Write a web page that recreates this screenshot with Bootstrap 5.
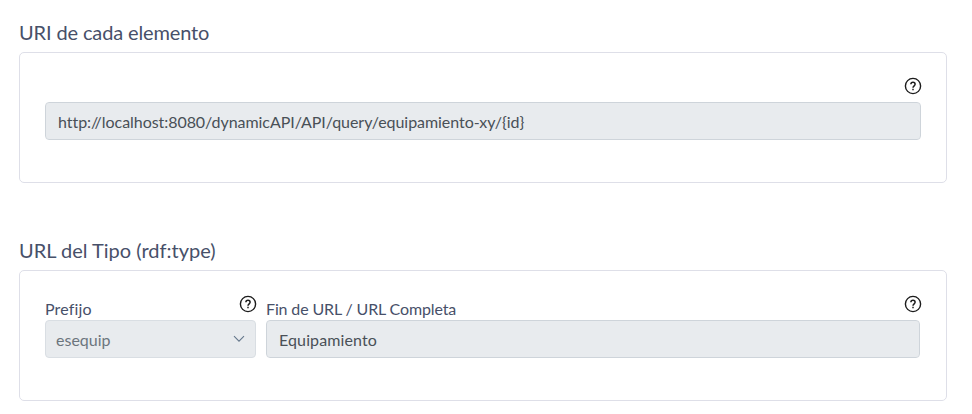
<!DOCTYPE html>
<html lang="es">
<head>
<meta charset="utf-8">
<meta name="viewport" content="width=device-width, initial-scale=1">
<title>URI</title>
<link href="https://cdn.jsdelivr.net/npm/bootstrap@5.3.0/dist/css/bootstrap.min.css" rel="stylesheet">
<style>
body{font-family:Lato,sans-serif;color:#475069;font-size:16px;background:#fff;overflow:hidden;font-variant-ligatures:none}
.page{padding:18px 25px 0 19px}
.title{font-size:20px;line-height:28px;height:34px;font-weight:400;margin:0}
.title-uri{letter-spacing:-.13px}
.panel{border:1px solid #dedfe8;border-radius:5px;height:131px;padding:22px 25px 0}
.panel+.title{margin-top:53px}
.labels{height:27px}
.labels label{padding-top:4px}
.label-prefix{letter-spacing:.15px}
.label-ending{letter-spacing:-.14px}
.field,.field:focus,.field:disabled{height:38px;background-color:#e8ebee;border:1px solid #ced4da;border-radius:4px;color:#495057;opacity:1}
.uri{letter-spacing:-.05px}
.ending{letter-spacing:.12px}
.prefix,.prefix:disabled{padding:7px 30px 5px 10px;color:#6c757d;border-color:#d9dee3;background-image:none}
.help{width:18px;height:18px;color:#1c1c1c;margin:2px -.5px 0 0}
.pre .help{margin-right:-1px}
.chevron{width:12px;height:8px;right:11px;top:15px;color:#65788c}
.pre{width:211px}
.rest{margin-left:10px}
.rest .field{width:calc(100% - 1px)}
</style>
</head>
<body>
<svg class="d-none"><symbol id="help" viewBox="0 0 18 18"><g fill="none" stroke="currentColor"><circle cx="9" cy="9" r="7.6" stroke-width="1.4"/><path d="M6.9 7.3c0-2.6 4.2-2.6 4.2 0 0 1.5-2.1 1.6-2.1 3.5" stroke-width="1.5"/><path d="M9 11.7v1.5" stroke-width="1.5"/></g></symbol></svg>
<main class="page">
<h2 class="title title-uri">URI de cada elemento</h2>
<section class="panel">
<div class="labels d-flex justify-content-end"><svg class="help"><use href="#help"/></svg></div>
<input class="form-control field uri" value="http://localhost:8080/dynamicAPI/API/query/equipamiento-xy/{id}" readonly>
</section>
<h2 class="title">URL del Tipo (rdf:type)</h2>
<section class="panel">
<div class="d-flex">
<div class="pre">
<div class="labels d-flex justify-content-between"><label class="label-prefix" for="prefix">Prefijo</label><svg class="help"><use href="#help"/></svg></div>
<div class="position-relative">
<select id="prefix" class="form-select field prefix" disabled><option>esequip</option></select>
<svg class="chevron position-absolute" viewBox="0 0 12 8" fill="none" stroke="currentColor" stroke-width="1.1"><path d="M1 1.2 6 6.2l5-5"/></svg>
</div>
</div>
<div class="flex-grow-1 rest">
<div class="labels d-flex justify-content-between"><label class="label-ending" for="ending">Fin de URL / URL Completa</label><svg class="help"><use href="#help"/></svg></div>
<input id="ending" class="form-control field ending" value="Equipamiento" readonly>
</div>
</div>
</section>
</main>
<script src="https://cdn.jsdelivr.net/npm/bootstrap@5.3.0/dist/js/bootstrap.bundle.min.js"></script>
</body>
</html>
